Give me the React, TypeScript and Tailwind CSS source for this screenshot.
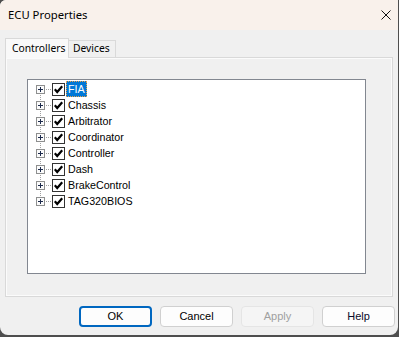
import React from 'react'

const items = ['FIA', 'Chassis', 'Arbitrator', 'Coordinator', 'Controller', 'Dash', 'BrakeControl', 'TAG320BIOS']

function Connector({ first, last }: { first: boolean; last: boolean }) {
  const dots: React.ReactNode[] = []
  if (!first) {
    for (let y = 0; y < 4; y += 2) dots.push(<rect key={'t' + y} x={4} y={y} width={1} height={1} fill="#a0a0a0" />)
  }
  if (!last) {
    for (let y = 14; y < 16; y += 2) dots.push(<rect key={'b' + y} x={4} y={y} width={1} height={1} fill="#a0a0a0" />)
  }
  for (let x = 10; x < 16; x += 2) dots.push(<rect key={'h' + x} x={x} y={8} width={1} height={1} fill="#a0a0a0" />)
  return (
    <svg width="16" height="16" viewBox="0 0 16 16" className="shrink-0">
      {dots}
      <rect x={0.5} y={4.5} width={8} height={8} fill="#fbfbfb" stroke="#8e8f8f" />
      <path d="M2 8.5h5M4.5 6v5" stroke="#1c2a4c" strokeWidth={1} />
    </svg>
  )
}

function Check() {
  return (
    <span className="w-[13px] h-[13px] border border-[#333] bg-white flex items-center justify-center shrink-0">
      <svg width="11" height="11" viewBox="0 0 11 11">
        <path d="M1.8 5.3 L4.2 8 L9.2 2.2" stroke="#000" strokeWidth={2.2} fill="none" />
      </svg>
    </span>
  )
}

const ui = { fontFamily: '"Noto Sans", "Open Sans", sans-serif' }

export default function App() {
  return (
    <div className="w-[399px] h-[337px] bg-[#4e4e4e] overflow-hidden" style={{ fontFamily: '"Liberation Sans", Arial, sans-serif' }}>
      <div className="w-[398px] h-[335px] bg-[#f0f0f0] rounded-b-[8px] rounded-tl-[6px] overflow-hidden flex flex-col">
        {/* title bar */}
        <div className="h-[30px] bg-[#f9f1eb] flex items-center justify-between pl-[8px] pr-[7px] shrink-0">
          <span className="text-[11.3px] text-black" style={ui}>ECU Properties</span>
          <svg width="10" height="10" viewBox="0 0 10 10">
            <path d="M0.5 0.5 L9.5 9.5 M9.5 0.5 L0.5 9.5" stroke="#111" strokeWidth={1} />
          </svg>
        </div>

        {/* tabs */}
        <div className="px-[5px] pt-[8px]">
          <div className="flex items-end h-[19px] relative z-10">
            <div className="w-[64px] h-[20px] -mb-px bg-[#f9f9f9] border border-[#d9d9d9] border-b-0 flex items-center pl-[6px] text-[10.3px] text-black" style={ui}>
              Controllers
            </div>
            <div className="w-[47px] h-[17px] bg-[#f0f0f0] border border-[#d9d9d9] border-l-0 border-b-0 flex items-center pl-[4px] text-[10.3px] text-black" style={ui}>
              Devices
            </div>
          </div>
          <div className="h-[240px] border border-[#d9d9d9] shadow-[inset_0_0_0_1px_#fbfbfb] bg-[#f0f0f0] pl-[21px] pt-[21px]">
            <div className="w-[339px] h-[195px] border border-[#828790] bg-white pt-[1px] pl-[8px]">
              {items.map((name, i) => (
                <div key={name} className="h-[16px] flex items-center">
                  <Connector first={i === 0} last={i === items.length - 1} />
                  <Check />
                  <span
                    className={
                      i === 0
                        ? 'ml-[1px] px-[2px] h-[16px] flex items-center bg-[#0078d7] text-white outline outline-1 outline-dotted outline-[#e9a34e] -outline-offset-1 text-[10.7px]'
                        : 'ml-[3px] text-[10.7px] text-black'
                    }
                  >
                    {name}
                  </span>
                </div>
              ))}
            </div>
          </div>
        </div>

        {/* buttons */}
        <div className="flex gap-[8px] pl-[79px] pt-[9px]">
          <button className="w-[73px] h-[21px] rounded-[4px] border-2 border-[#0067c0] bg-[#fdfdfd] text-[11px] text-black">OK</button>
          <button className="w-[73px] h-[21px] rounded-[4px] border border-[#d0d0d0] bg-[#fdfdfd] text-[11px] text-black">Cancel</button>
          <button className="w-[73px] h-[21px] rounded-[4px] border border-[#e5e5e5] bg-[#f5f5f5] text-[11px] text-[#a0a0a0]">Apply</button>
          <button className="w-[73px] h-[21px] rounded-[4px] border border-[#d0d0d0] bg-[#fdfdfd] text-[11px] text-[#0a0a2a]">Help</button>
        </div>
      </div>
    </div>
  )
}
